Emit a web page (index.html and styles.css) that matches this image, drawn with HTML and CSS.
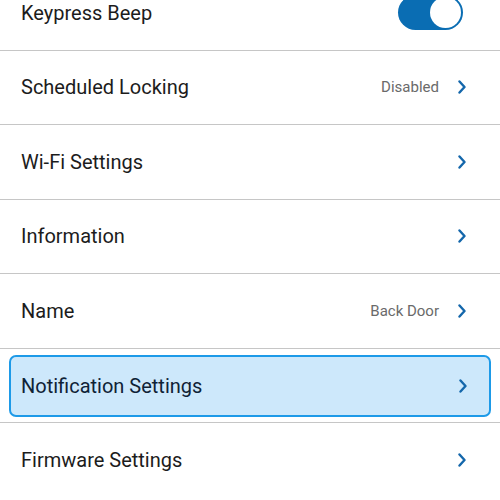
FILE: index.html
```html
<!DOCTYPE html>
<html>
<head>
<meta charset="utf-8">
<link rel="stylesheet" href="styles.css">
</head>
<body>
<div class="list">
  <div class="row">
    <div class="row-inner">
      <span class="label">Keypress Beep</span>
      <span class="toggle"><span class="knob"></span></span>
    </div>
  </div>
  <div class="row">
    <div class="row-inner">
      <span class="label">Scheduled Locking</span>
      <span class="value">Disabled</span>
      <svg class="chev" width="8" height="14" viewBox="0 0 8 14"><path d="M1.5 1.5 L6.5 7 L1.5 12.5" fill="none" stroke="#1467ab" stroke-width="2.4" stroke-linecap="round" stroke-linejoin="round"/></svg>
    </div>
  </div>
  <div class="row">
    <div class="row-inner">
      <span class="label">Wi-Fi Settings</span>
      <svg class="chev" width="8" height="14" viewBox="0 0 8 14"><path d="M1.5 1.5 L6.5 7 L1.5 12.5" fill="none" stroke="#1467ab" stroke-width="2.4" stroke-linecap="round" stroke-linejoin="round"/></svg>
    </div>
  </div>
  <div class="row">
    <div class="row-inner">
      <span class="label">Information</span>
      <svg class="chev" width="8" height="14" viewBox="0 0 8 14"><path d="M1.5 1.5 L6.5 7 L1.5 12.5" fill="none" stroke="#1467ab" stroke-width="2.4" stroke-linecap="round" stroke-linejoin="round"/></svg>
    </div>
  </div>
  <div class="row">
    <div class="row-inner">
      <span class="label">Name</span>
      <span class="value">Back Door</span>
      <svg class="chev" width="8" height="14" viewBox="0 0 8 14"><path d="M1.5 1.5 L6.5 7 L1.5 12.5" fill="none" stroke="#1467ab" stroke-width="2.4" stroke-linecap="round" stroke-linejoin="round"/></svg>
    </div>
  </div>
  <div class="row selected">
    <div class="row-inner">
      <span class="label">Notification Settings</span>
      <svg class="chev" width="8" height="14" viewBox="0 0 8 14"><path d="M1.5 1.5 L6.5 7 L1.5 12.5" fill="none" stroke="#1467ab" stroke-width="2.4" stroke-linecap="round" stroke-linejoin="round"/></svg>
    </div>
  </div>
  <div class="row last">
    <div class="row-inner">
      <span class="label">Firmware Settings</span>
      <svg class="chev" width="8" height="14" viewBox="0 0 8 14"><path d="M1.5 1.5 L6.5 7 L1.5 12.5" fill="none" stroke="#1467ab" stroke-width="2.4" stroke-linecap="round" stroke-linejoin="round"/></svg>
    </div>
  </div>
</div>
</body>
</html>
```
FILE: styles.css
```css
html, body {
  margin: 0;
  padding: 0;
  background: #ffffff;
  overflow: hidden;
}
body {
  font-family: Roboto, "Liberation Sans", sans-serif;
  width: 500px;
  height: 500px;
}
.list {
  margin-top: -24px;
}
.row {
  box-sizing: border-box;
  height: 74.5px;
  border-bottom: 1px solid #c6c6c6;
  display: flex;
}
.row.last {
  border-bottom: none;
}
.row-inner {
  flex: 1;
  display: flex;
  align-items: center;
  padding: 0 34px 0 21px;
}
.label {
  flex: 1;
  font-size: 20px;
  font-weight: 400;
  color: #1c1c1c;
}
.value {
  font-size: 15px;
  color: #6a6a6a;
  margin-right: 19px;
}
.chev {
  display: block;
}
.toggle {
  box-sizing: border-box;
  width: 65px;
  height: 35px;
  border-radius: 18px;
  background: #0a6db3;
  display: flex;
  justify-content: flex-end;
  align-items: center;
  padding: 2px;
  margin-right: 3px;
}
.knob {
  width: 31px;
  height: 31px;
  border-radius: 50%;
  background: #ffffff;
}
.row.selected {
  padding: 6px 9px 5px 9px;
}
.row.selected .row-inner {
  background: #cde8fb;
  border: 2px solid #1d9ae8;
  border-radius: 7px;
  padding: 0 22px 0 10px;
}
.row.selected .label {
  color: #0f2236;
}
```
